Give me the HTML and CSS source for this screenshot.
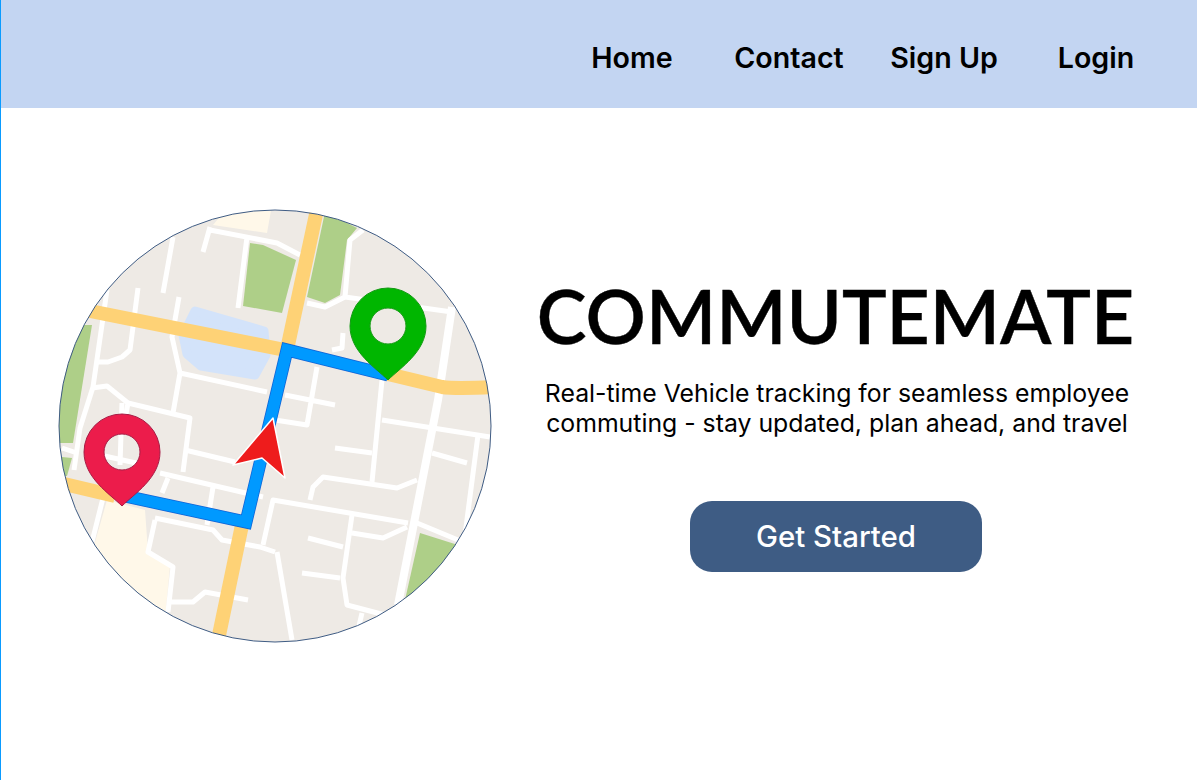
FILE: index.html
```html
<!DOCTYPE html>
<html lang="en">
<head>
<meta charset="utf-8">
<title>CommuteMate</title>
<link rel="stylesheet" href="styles.css">
</head>
<body>
<header class="topbar">
  <nav class="nav">
    <a class="nav-link" href="#">Home</a>
    <a class="nav-link nav-link-wide" href="#">Contact</a>
    <a class="nav-link nav-link-narrow" href="#">Sign Up</a>
    <a class="nav-link nav-link-narrow" href="#">Login</a>
  </nav>
</header>
<main class="hero">
  <svg class="map" viewBox="58 209 434 434" width="434" height="434" aria-hidden="true">
    <defs>
      <clipPath id="disc"><circle cx="275" cy="426" r="216"/></clipPath>
      <filter id="soft" x="0" y="0" width="1" height="1"><feGaussianBlur stdDeviation="0.4"/></filter>
    </defs>
    <g clip-path="url(#disc)">
    <g filter="url(#soft)">
      <rect x="50" y="200" width="450" height="450" fill="#eeeae5"/>
      <g fill="#fff8e9">
        <path d="M213 225L223 213L272 205L267 233Z"/>
        <path d="M107 500L145 510L148 552L170 566L165 620L90 560Z"/>
      </g>
      <g fill="#aecf88">
        <path d="M250 243L263 245L296 260L282 313L243 306Z"/>
        <path d="M325 212L357 228L347 240L340 295L325 303L307 297Z"/>
        <path d="M92 325L73 443L50 443L50 325Z"/>
        <path d="M62 457L72 458L67 476L55 476Z"/>
        <path d="M420 533L458 545L440 610L405 600Z"/>
      </g>
      <path d="M195 311L264 331L266 355L255 375L201 366L187 354L183 335Z" fill="#d3e3fa" stroke="#d3e3fa" stroke-width="9" stroke-linejoin="round"/>
      <g fill="none" stroke="#fff" stroke-width="5" stroke-linejoin="round">
        <path d="M173 237L163 293M210 227L203 252M210 230L277 243L300 255M247 237L238 308"/>
        <path d="M107 290L93 387L80 428L74 470"/>
        <path d="M138 288L130 350L122 357L108 362L97 362"/>
        <path d="M179 297L172 337L180 373L173 413M180 373L267 392"/>
        <path d="M92 388L107 386L128 403L190 418L183 472M128 403L123 430"/>
        <path d="M363 230L350 240L345 297L325 307L307 303M345 297L452 312"/>
        <path d="M343 333L342 348L332 350M382 380L372 482M317 367L307 425L275 420M285 395L335 405"/>
        <path d="M382 420L490 437M335 448L372 453"/>
        <path d="M310 500L313 487L323 477L397 488L417 480"/>
        <path d="M263 545L273 500L408 523M417 523L458 540M432 453L467 463M478 435L465 535"/>
        <path d="M352 515L343 578L347 605L385 615M352 533L383 538L407 527M308 538L343 547M302 573L340 578M277 552L292 640M362 613L358 630"/>
        <path d="M185 450L235 462M62 448L77 453M160 473L263 497M168 478L162 493M213 487L207 525M122 403L120 465M100 455L145 465"/>
        <path d="M155 518L213 530L222 540L260 547L275 552M155 520L148 552L173 567L168 612M170 602L193 602L205 592L248 600M103 498L92 542"/>
      </g>
      <path d="M452 307L438 400L398 605" fill="none" stroke="#fff" stroke-width="8"/>
      <g fill="none" stroke="#fed276" stroke-width="14">
        <path d="M90 311L290 351"/>
        <path d="M318 205L288 345"/>
        <path d="M242 525L218 640"/>
        <path d="M60 483L115 496"/>
        <path d="M388 374L442 387Q455 389 495 387"/>
      </g>
      <path d="M120 495L246 522L287 350L388 375" fill="none" stroke="#0f62d6" stroke-width="13" stroke-linejoin="miter"/>
      <path d="M120 495L246 522L287 350L388 375" fill="none" stroke="#0099ff" stroke-width="11.500" stroke-linejoin="miter"/>
      <path d="M233 465L273 418L285 478L262 458Z" fill="#ee1c1c" stroke="#fff" stroke-width="1.500" stroke-linejoin="round"/>
      <path fill-rule="evenodd" d="M388 380C376 368 350 352 350 326A38 38 0 0 1 426 326C426 352 400 368 388 380ZM388 308A18 18 0 0 0 388 344A18 18 0 0 0 388 308Z" fill="#03b603" stroke="#129a12" stroke-width="1"/>
      <path fill-rule="evenodd" d="M122 506C110 494 84 478 84 452A38 38 0 0 1 160 452C160 478 134 494 122 506ZM122 434A18 18 0 0 0 122 470A18 18 0 0 0 122 434Z" fill="#ec1a4b" stroke="#a81c45" stroke-width="1"/>
    </g>
    </g>
    <circle cx="275" cy="426" r="216" fill="none" stroke="#3f5c84" stroke-width="1"/>
  </svg>
  <section class="intro">
    <h1 class="title">COMMUTEMATE</h1>
    <p class="tagline">Real-time Vehicle tracking for seamless employee commuting - stay updated, plan ahead, and travel</p>
    <a class="cta" href="#">Get Started</a>
  </section>
</main>
</body>
</html>
```
FILE: styles.css
```css
* { box-sizing: border-box; }
html, body { margin: 0; height: 100%; }
body {
  background: #fff;
  border-left: 1px solid #0a9bff;
  font-family: "Inter", "Liberation Sans", sans-serif;
  color: #000;
  overflow: hidden;
}
.topbar {
  height: 108px;
  background: #c3d5f2;
  display: flex;
  justify-content: flex-end;
  align-items: center;
  padding: 6px 25px 0 0;
}
.nav { display: flex; }
.nav-link {
  width: 156px;
  text-align: center;
  font-size: 28.600px;
  font-weight: 560;
  color: #000;
  text-decoration: none;
}
.nav-link-wide { width: 158px; }
.nav-link-narrow { width: 152px; }
.hero {
  display: flex;
  padding: 101px 0 0 57px;
}
.map { display: block; flex: none; }
.intro {
  width: 620px;
  margin-left: 34px;
  display: flex;
  flex-direction: column;
  align-items: center;
  padding-top: 68px;
}
.title {
  margin: 0 0 0 -1px;
  font-family: "Lato", sans-serif;
  font-size: 75px;
  font-weight: 600;
  line-height: 76px;
  white-space: nowrap;
  -webkit-text-stroke: 0.4px #000;
}
.tagline {
  margin: 25px 0 0 2px;
  width: 610px;
  text-align: center;
  font-size: 24.800px;
  line-height: 30px;
}
.cta {
  margin-top: 63px;
  width: 292px;
  height: 71px;
  border-radius: 22px;
  background: #3e5c84;
  color: #fff;
  font-size: 29.400px;
  font-weight: 500;
  text-decoration: none;
  display: flex;
  align-items: center;
  justify-content: center;
}
```
